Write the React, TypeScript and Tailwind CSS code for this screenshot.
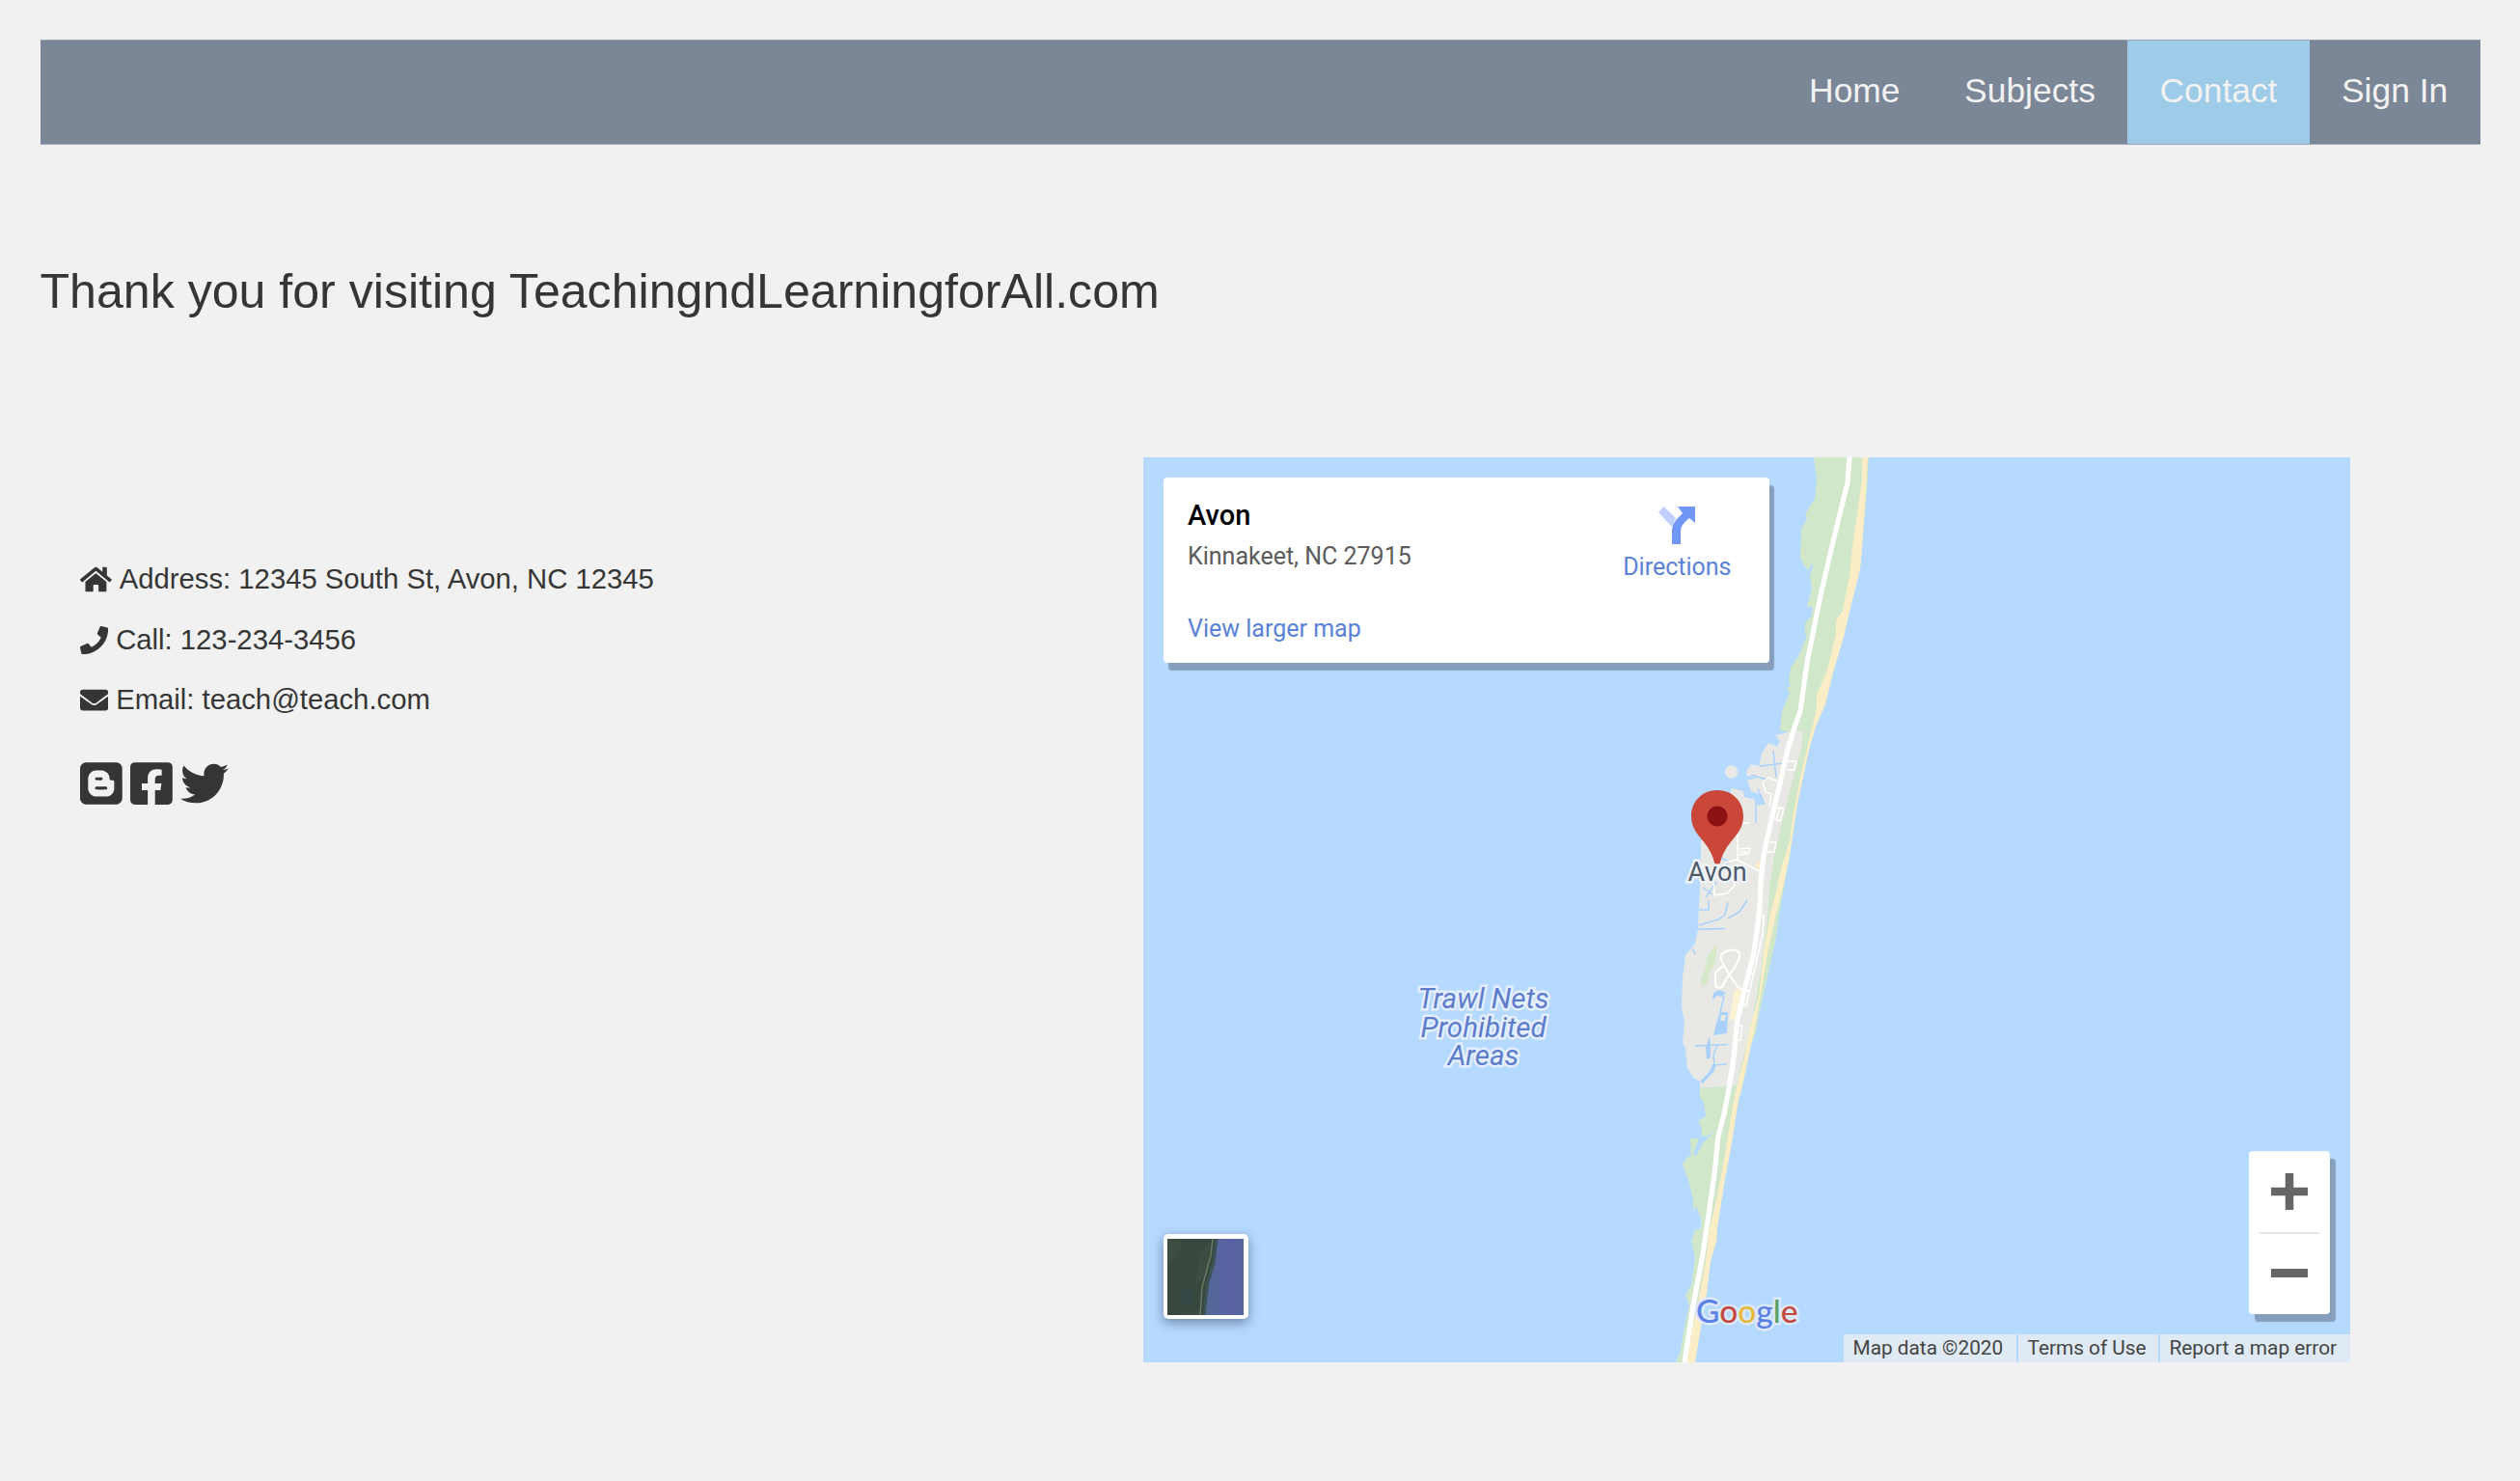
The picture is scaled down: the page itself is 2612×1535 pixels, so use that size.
import type { ReactNode } from "react";
import { FaBlogger, FaEnvelope, FaFacebookSquare, FaHome, FaPhone, FaTwitter } from "react-icons/fa";

const navItems = ["Home", "Subjects", "Contact", "Sign In"];

function Nav() {
  return (
    <nav className="flex h-[109px] justify-end border-y border-[#98a3b3] bg-[#7b8696]">
      {navItems.map((item) => (
        <a
          key={item}
          className={
            "flex items-center px-[33.300px] pb-[1px] text-[35.400px] leading-none text-[#f2f2f2] " +
            (item === "Contact" ? "bg-[#9dcbe8]" : "")
          }
        >
          {item}
        </a>
      ))}
    </nav>
  );
}

function ContactLine({ icon, children }: { icon: ReactNode; children: ReactNode }) {
  return (
    <p className="flex h-[62.500px] items-center gap-[8px] text-[29.250px] leading-none whitespace-nowrap">
      {icon}
      <span>{children}</span>
    </p>
  );
}

function Coastline() {
  return (
    <svg className="block h-full w-full" viewBox="1185 474 1251 938" preserveAspectRatio="none">
      <rect x="1185" y="474" width="1251" height="938" fill="#b6d9ff" />
      <path
        fill="#d0e7c9"
        d="M1880 474 1883 497 1881 517 1871 533 1873 538 1867 548 1866 577 1869 585 1874 591 1880 583 1876 598 1878 610 1873 629 1879 629 1877 640 1871 645 1871 657 1873 659 1864 680 1856 692 1854 707 1857 710 1852 713 1855 718 1847 737 1845 757 1851 758 1857 760 1843 820 1828 887 1824 930 1808 1027 1794 1125 1762 1128 1762 1137 1766 1143 1768 1157 1760 1162 1764 1168 1763 1177 1770 1178 1778 1172 1765 1185 1758 1198 1755 1196 1761 1180 1752 1180 1753 1198 1749 1199 1744 1207 1750 1223 1755 1243 1755 1255 1758 1250 1763 1263 1763 1273 1757 1275 1753 1287 1757 1303 1753 1332 1747 1342 1751 1353 1745 1380 1742 1400 1737 1412H1757L1760 1393 1769 1340 1773 1307 1779 1287 1780 1273 1787 1227 1794 1190 1802 1140 1805 1130 1815 1083 1820 1070 1825 1043 1840 977 1846 937 1855 887 1857 873 1863 833 1875 777 1882 753 1892 730 1900 697 1911 660 1918 630 1928 590 1930 567 1935 510 1937 474Z"
      />
      <path
        fill="#fbedc5"
        d="M1930 474V497L1920 567 1917 597 1910 633 1903 643V657L1893 697 1883 720V733L1880 747 1868 797 1859 843 1855 872 1847 897 1842 920 1835 947 1828 987 1823 1033 1813 1067 1808 1097 1800 1127 1797 1140 1788 1197 1780 1240 1772 1273 1768 1307 1762 1340 1755 1373 1748 1412H1757L1760 1393 1769 1340 1773 1307 1779 1287 1780 1273 1787 1227 1794 1190 1802 1140 1805 1130 1815 1083 1820 1060 1825 1030 1833 983 1842 943 1848 920 1855 887 1857 873 1863 833 1875 777 1882 753 1892 730 1900 697 1911 660 1918 630 1928 590 1930 567 1934 510 1936 474Z"
      />
      <path
        fill="#e8e8e4"
        d="M1840 762 1857 758 1869 758 1867 777 1860 800 1850 840 1840 883 1834 920 1832 953 1825 1007 1817 1053 1800 1125 1762 1128V1121L1755 1117 1749 1107 1747 1087 1744 1080 1746 1060 1743 1043 1744 1013 1747 990 1757 978 1760 963 1761 937 1763 907V873L1768 850 1794 830V817L1807 820 1808 826 1820 829 1822 835 1829 833 1826 824 1815 820 1811 809 1822 806 1810 804 1811 798 1815 792 1823 794 1826 781 1833 770 1842 774 1845 768Z"
      />
      <circle cx="1794.500" cy="800" r="6.800" fill="#e8e8e4" />
      <path fill="#d5e8c8" d="M1780 979 1770 990 1767 1005 1763 1013V1021H1769L1772 1008 1777 1000Z" />
      <path fill="#fdf2d3" d="M1797 1026 1806 1024 1798 1057H1793Z" />
      <path fill="#fbedc5" d="M1827 889 1819 897 1827 904Z" />
      <path
        fill="#a9d1fb"
        d="M1776 1029 1782 1026 1789 1029 1785 1033 1779 1032 1775 1037ZM1783 1049 1791 1049 1790 1071 1776 1073 1780 1057ZM1772 1074 1773 1083 1773 1096 1769 1098 1768 1086Z"
      />
      <path fill="#e8e8e4" d="M1784 1052H1789L1788 1058H1783Z" />
      <g fill="none" stroke="#a9d1fb" strokeWidth="1.500">
        <path d="M1787 1032 1783 1049M1824 794 1849 791M1838 778 1841 806M1815 803 1831 808M1820 828 1820 853M1822 818 1829 834M1761 943H1771V933M1761 959 1781 953 1788 948 1791 935M1791 952 1803 945 1811 933M1760 963 1788 962.500M1754 983 1757 989M1757 1084 1791 1082.500M1780 1083 1776 1093 1777 1104M1790 1103 1776 1104 1771 1114 1763 1121M1765 920 1775 927M1782 888 1791 893 1788 898M1768 930 1779 914" />
        <path d="M1777 1103 1775 1110 1770 1115 1764 1122" strokeWidth="3" />
      </g>
      <g fill="none" stroke="#fff" strokeLinejoin="round">
        <path
          strokeWidth="1.500"
          d="M1799 853H1813M1801 861V893M1803 880 1814 879 1812 885 1802 886M1803 883H1811M1776 912 1777 928 1790 926 1798 918 1796 900M1788 894 1800 891 1824 903M1853 789H1862L1860 798H1852M1842 810 1833 806 1827 811 1830 821 1836 823 1834 837M1842 837 1849 838 1845 851 1839 849M1845 836 1841 850M1834 873 1841 873 1839 883 1831 883M1824 949H1828L1827 968 1810 1042H1806M1823 976H1825M1819 992H1821M1815 1009H1818M1810 1027H1814M1800 1063H1806L1804 1078H1801M1798 1102 1796 1112"
        />
        <path
          strokeWidth="2"
          d="M1808 1026 1802 1024 1793 1011 1785 997C1781 990 1786 987 1792 985 1802 983 1805 988 1802 995 1799 1004 1791 1010 1787 1019 1785 1025 1781 1025 1778 1022V1008L1786 1001"
        />
        <path
          strokeWidth="5.200"
          d="M1917 474 1915 500 1902 553 1887 617 1873 687 1866 737 1859 757 1853 777 1843 820 1833 863 1828 887 1825 913 1824 940 1822 957 1818 987 1808 1027 1801 1057 1797 1097 1793 1123 1787 1155 1781 1177 1777 1217 1769 1273 1765 1300 1755 1353 1746 1412"
        />
      </g>
    </svg>
  );
}

function PlaceCard() {
  return (
    <div className="absolute top-[21px] left-[21px] flex h-[192px] w-[628px] justify-between rounded-[4px] bg-white pl-[25.500px] font-[Roboto,sans-serif] shadow-[5px_8px_1px_#879fbd]">
      <div className="flex flex-col whitespace-nowrap">
        <h2 className="mt-[21px] text-[29px] leading-[36px] font-medium text-black">Avon</h2>
        <p className="mt-[10px] text-[25px] leading-[30px] text-[#5b5b5b]">Kinnakeet, NC 27915</p>
        <a className="mt-[45px] text-[25px] leading-[30px] text-[#5a82d6]">View larger map</a>
      </div>
      <a className="mr-[39px] flex flex-col items-center text-[25px] leading-[30px] text-[#5a82d6]">
        <svg className="mt-[29.500px] h-[39px] w-[38px]" viewBox="0 0 38 39">
          <path d="M0 6 5.500 0 18 12 14 21Z" fill="#c0cffc" />
          <path d="M20 0H38V17L32 12C26 17 23 20 23 26V39H14V26C14 17 19 13 25 7Z" fill="#7295f8" />
        </svg>
        <span className="mt-[9.500px]">Directions</span>
      </a>
    </div>
  );
}

function Satellite() {
  return (
    <div className="absolute bottom-[45px] left-[21px] h-[88px] w-[88px] rounded-[5px] bg-white p-[4.500px] shadow-[0_4px_12px_rgba(60,80,110,0.6)]">
      <svg className="block h-full w-full" viewBox="0 0 79 79">
        <defs>
          <linearGradient id="sea" x1="0" x2="1">
            <stop offset="0.450" stopColor="#526c91" />
            <stop offset="0.800" stopColor="#5a61a5" />
            <stop offset="1" stopColor="#53649a" />
          </linearGradient>
        </defs>
        <rect width="79" height="79" fill="url(#sea)" />
        <path d="M0 0H52L49 20 43 40 38 79H0Z" fill="#38483f" />
        <path d="M0 0H16L10 18 0 25ZM34 15 44 5 42 35 28 50ZM10 79 32 74 35 79Z" fill="#415143" opacity=".6" />
        <path d="M15 50 28 55 24 70 12 66Z" fill="#344a4a" opacity=".6" />
        <path d="M47 0 45 17 41 32 36 50 34 79" fill="none" stroke="#687861" strokeWidth="1.500" />
        <path d="M51 0 48 25 42 45 38 79" fill="none" stroke="#3c5357" strokeWidth="3" />
      </svg>
    </div>
  );
}

function ZoomControl() {
  return (
    <div className="absolute right-[21px] bottom-[50px] flex h-[169px] w-[84px] flex-col items-center rounded-[4px] bg-white shadow-[6px_8px_1px_#879fbd]">
      <button className="flex h-[84px] items-center" aria-label="Zoom in">
        <svg className="h-[38px] w-[38px]" viewBox="0 0 38 38">
          <path d="M19 0V38M0 19H38" stroke="#666" strokeWidth="8.500" />
        </svg>
      </button>
      <div className="h-[2px] w-[62px] bg-[#e6e6e6]" />
      <button className="flex h-[83px] items-center pb-[2px]" aria-label="Zoom out">
        <span className="block h-[9px] w-[38px] bg-[#666]" />
      </button>
    </div>
  );
}

function MapPanel() {
  return (
    <section className="relative h-[938px] w-[1251px] shrink-0 overflow-hidden font-[Roboto,sans-serif]">
      <Coastline />
      <PlaceCard />
      <svg className="absolute top-[345px] left-[568px] h-[79px] w-[54px]" viewBox="0 0 54 79">
        <path
          d="M27 0C11 0 0 12 0 27 0 36 4 43 10 50 17 58 22 66 24 75Q27 82 30 75C32 66 37 58 44 50 50 43 54 36 54 27 54 12 43 0 27 0Z"
          fill="#ca4638"
        />
        <circle cx="27" cy="27" r="10.500" fill="#8b1112" />
      </svg>
      <span className="absolute top-[414px] left-[565px] text-[27px] leading-[32px] tracking-[0.300px] text-[#4f5a6b] [-webkit-text-stroke:5px_#eef3f8] [paint-order:stroke_fill]">
        Avon
      </span>
      <span className="absolute top-[547px] left-[273px] w-[160px] text-center text-[29.500px] leading-[29.500px] text-[#5d7ccb] italic [-webkit-text-stroke:5px_#e3effe] [paint-order:stroke_fill]">
        Trawl Nets
        <br />
        Prohibited
        <br />
        Areas
      </span>
      <Satellite />
      <span className="absolute top-[864px] left-[573.500px] font-[Lato,sans-serif] text-[33.500px] leading-[40px] font-medium [-webkit-text-stroke:5px_#dbe9fa] [paint-order:stroke_fill]">
        <span className="text-[#5b80e6]">G</span>
        <span className="text-[#c6483d]">o</span>
        <span className="text-[#e6b93a]">o</span>
        <span className="text-[#5b80e6]">g</span>
        <span className="text-[#5ba262]">l</span>
        <span className="text-[#c6483d]">e</span>
      </span>
      <ZoomControl />
      <div className="absolute right-0 bottom-0 flex h-[29px] gap-[2px] text-[20.800px] leading-[28px] whitespace-nowrap text-[#444]">
        <span className="w-[179px] bg-[#e0eaf5] pl-[10px]">Map data ©2020</span>
        <span className="w-[145px] bg-[#e0eaf5] pl-[10px]">Terms of Use</span>
        <span className="w-[197px] bg-[#e0eaf5] pl-[10px]">Report a map error</span>
      </div>
    </section>
  );
}

export default function App() {
  return (
    <main className="h-[1535px] w-[2612px] overflow-hidden bg-[#f1f1f1] px-[41.500px] pt-[41px] font-['Liberation_Sans',Arial,sans-serif] text-[#353535]">
      <Nav />
      <h1 className="mt-[121.500px] text-[50.100px] leading-[60px] whitespace-nowrap">
        Thank you for visiting TeachingndLearningforAll.com
      </h1>
      <div className="mt-[142.500px] flex justify-between pr-[135px] pl-[41.500px]">
        <address className="pt-[95.500px] not-italic">
          <ContactLine icon={<FaHome className="h-[29.200px] w-[32.800px]" />}>
            Address: 12345 South St, Avon, NC 12345
          </ContactLine>
          <ContactLine icon={<FaPhone className="h-[29.200px] w-[29.200px]" />}>Call: 123-234-3456</ContactLine>
          <ContactLine icon={<FaEnvelope className="h-[29.200px] w-[29.200px]" />}>Email: teach@teach.com</ContactLine>
          <div className="mt-[30px] flex gap-[8px] text-[50px]">
            <FaBlogger className="w-[43.800px]" />
            <FaFacebookSquare className="w-[43.800px]" />
            <FaTwitter />
          </div>
        </address>
        <MapPanel />
      </div>
    </main>
  );
}
